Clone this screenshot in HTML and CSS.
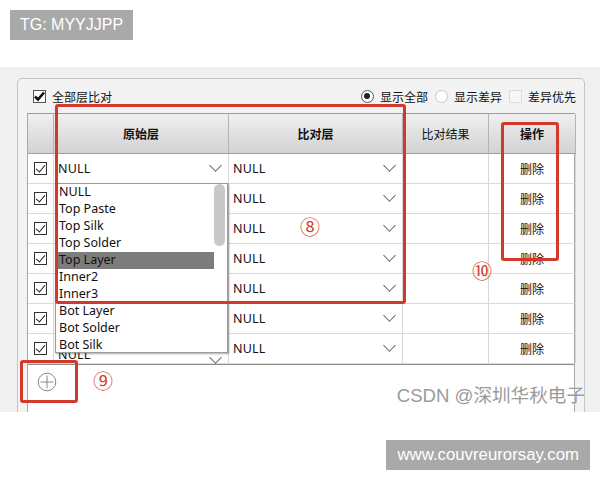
FILE: index.html
```html
<!DOCTYPE html>
<html lang="zh-CN">
<head>
    <meta charset="UTF-8">
    <title>层比对</title>
    <link rel="stylesheet" href="styles.css">
</head>
<body>
    <div class="top">
        <span class="tag">TG: MYYJJPP</span>
    </div>

    <div class="panel">
        <div class="group">
            <div class="toolbar">
                <div class="opt">
                    <span class="cb cb-main"><svg width="13" height="13" viewBox="0 0 13 13"><path d="M2 6.5 L5 9.5 L11 2.5" fill="none" stroke="#111" stroke-width="2.6"/></svg></span>
                    全部层比对
                </div>
                <div class="filters">
                    <div class="opt"><span class="radio on"></span>显示全部</div>
                    <div class="opt"><span class="radio"></span>显示差异</div>
                    <div class="opt"><span class="cb cb-off"></span>差异优先</div>
                </div>
            </div>

            <div class="grid">
                <div class="th"></div>
                <div class="th bold">原始层</div>
                <div class="th bold">比对层</div>
                <div class="th">比对结果</div>
                <div class="th bold">操作</div>

                <div class="td chk"><span class="cb"></span></div>
                <div class="td combo">NULL<span class="chev"></span></div>
                <div class="td combo">NULL<span class="chev"></span></div>
                <div class="td"></div>
                <div class="td act">删除</div>

                <!-- rows 2-6: first combo is covered by the open list -->
                <div class="td chk"><span class="cb"></span></div>
                <div class="td combo"></div>
                <div class="td combo">NULL<span class="chev"></span></div>
                <div class="td"></div>
                <div class="td act">删除</div>

                <div class="td chk"><span class="cb"></span></div>
                <div class="td combo"></div>
                <div class="td combo">NULL<span class="chev"></span></div>
                <div class="td"></div>
                <div class="td act">删除</div>

                <div class="td chk"><span class="cb"></span></div>
                <div class="td combo"></div>
                <div class="td combo">NULL<span class="chev"></span></div>
                <div class="td"></div>
                <div class="td act">删除</div>

                <div class="td chk"><span class="cb"></span></div>
                <div class="td combo"></div>
                <div class="td combo">NULL<span class="chev"></span></div>
                <div class="td"></div>
                <div class="td act">删除</div>

                <div class="td chk"><span class="cb"></span></div>
                <div class="td combo"></div>
                <div class="td combo">NULL<span class="chev"></span></div>
                <div class="td"></div>
                <div class="td act">删除</div>

                <div class="td chk"><span class="cb"></span></div>
                <div class="td combo low">NULL<span class="chev"></span></div>
                <div class="td combo">NULL<span class="chev"></span></div>
                <div class="td"></div>
                <div class="td act">删除</div>
            </div>

            <div class="add">
                <svg width="20" height="20" viewBox="0 0 20 20"><circle cx="10" cy="10" r="8.8" fill="none" stroke="#888" stroke-width="1"/><path d="M10 3.5 V16.5 M3.5 10 H16.5" stroke="#888" stroke-width="1"/></svg>
            </div>
        </div>

        <!-- open dropdown of the first row -->
        <div class="dropdown">
            <div class="item">NULL</div>
            <div class="item">Top Paste</div>
            <div class="item">Top Silk</div>
            <div class="item">Top Solder</div>
            <div class="item sel">Top Layer</div>
            <div class="item">Inner2</div>
            <div class="item">Inner3</div>
            <div class="item">Bot Layer</div>
            <div class="item">Bot Solder</div>
            <div class="item">Bot Silk</div>
            <div class="thumb"></div>
        </div>

        <!-- annotations -->
        <div class="mark mark8"></div>
        <div class="mark mark9"></div>
        <div class="mark mark10"></div>
        <span class="num num8">⑧</span>
        <span class="num num9">⑨</span>
        <span class="num num10">⑩</span>
        <span class="wm">CSDN @深圳华秋电子</span>
    </div>

    <div class="bottom">
        <span class="tag tag-url">www.couvreurorsay.com</span>
    </div>
</body>
</html>
```

FILE: styles.css
```css
body {
    margin: 0;
    background: #ffffff;
    font-family: "Noto Sans", "Noto Sans CJK SC", sans-serif;
    font-size: 12px;
    color: #222;
}
.top {
    height: 67px;
    padding: 10px 0 0 10px;
    box-sizing: border-box;
}
.tag {
    display: inline-block;
    background: #a9a9a9;
    color: #ffffff;
    font-family: "Liberation Sans", sans-serif;
    font-size: 16px;
    line-height: 30px;
    padding: 0 10px;
}
.tag-url {
    font-size: 16.8px;
    padding: 0 11px;
}
.panel {
    position: relative;
    height: 345px;
    overflow: hidden;
    background: #f0f0f0;
}
.group {
    margin: 11px 0 0 17px;
    width: 568px;
    height: 400px;
    box-sizing: border-box;
    border: 1px solid #c4c4c4;
    border-radius: 5px;
    background: #f3f3f3;
    padding: 0 9px;
}
.toolbar {
    display: flex;
    align-items: center;
    justify-content: space-between;
    height: 34px;
    padding-left: 6px;
}
.filters {
    display: flex;
    gap: 7px;
    margin-right: -1px;
}
.opt {
    display: flex;
    align-items: center;
    gap: 6px;
    font-family: "Noto Sans CJK SC", sans-serif;
    font-size: 12px;
    color: #111;
}
.cb {
    display: inline-block;
    width: 13px;
    height: 13px;
    box-sizing: border-box;
    border: 1px solid #333;
    background: #fff;
    position: relative;
}
.cb-main {
    border-color: #555;
}
.cb-main svg {
    position: absolute;
    left: -1px;
    top: -1px;
}
.cb-off {
    border-color: #dcdcdc;
    background: #f7f7f7;
}
.radio {
    display: inline-block;
    width: 13px;
    height: 13px;
    box-sizing: border-box;
    border: 1px solid #c8c8c8;
    border-radius: 50%;
    background: #fff;
    position: relative;
}
.radio.on {
    border-color: #555;
}
.radio.on::after {
    content: "";
    position: absolute;
    left: 2.5px;
    top: 2.5px;
    width: 6px;
    height: 6px;
    border-radius: 50%;
    background: #222;
}
.grid {
    display: grid;
    grid-template-columns: 26px 175px 174px 86px 87px;
    grid-template-rows: 40px repeat(7, 30px);
    background: #ffffff;
    border: 1px solid #a8a8a8;
    border-bottom-color: #8f8f8f;
    border-top-color: #9c9c9c;
}
.th {
    display: flex;
    align-items: center;
    justify-content: center;
    background: linear-gradient(#f0f0f0, #d2d2d2);
    border-right: 1px solid #b4b4b4;
    border-bottom: 1px solid #a0a0a0;
    font-family: "Noto Sans CJK SC", sans-serif;
    font-size: 12px;
    color: #111;
}
.th.bold {
    font-weight: bold;
}
.td {
    display: flex;
    align-items: center;
    border-right: 1px solid #d8d8d8;
    border-bottom: 1px solid #dadada;
    font-size: 12.5px;
    color: #111;
}
.chk {
    justify-content: center;
}
.chk .cb::after {
    content: "";
    position: absolute;
    left: 3px;
    top: 0px;
    width: 4px;
    height: 8px;
    border-right: 1px solid #222;
    border-bottom: 1px solid #222;
    transform: rotate(40deg);
}
.combo {
    padding-left: 4px;
    justify-content: space-between;
    letter-spacing: 0.2px;
}
.combo.low {
    align-items: flex-end;
    padding-bottom: 1px;
    line-height: 14px;
}
.chev {
    width: 8px;
    height: 8px;
    margin: -6px 8px 0 0;
    border-right: 1.5px solid #666;
    border-bottom: 1.5px solid #666;
    transform: rotate(45deg);
}
.act {
    justify-content: center;
    font-family: "Noto Sans CJK SC", sans-serif;
    font-size: 12px;
}
.add {
    height: 60px;
    background: #ffffff;
    border-left: 1px solid #a8a8a8;
    border-right: 1px solid #a8a8a8;
    padding: 7px 0 0 9px;
    box-sizing: border-box;
}
.dropdown {
    position: absolute;
    left: 55px;
    top: 116px;
    width: 173px;
    height: 170px;
    background: #ffffff;
    border: 1px solid #9a9a9a;
    box-sizing: border-box;
    box-shadow: 1px 1px 2px rgba(0, 0, 0, 0.35);
}
.item {
    height: 17px;
    line-height: 15px;
    width: 158px;
    padding-left: 3px;
    box-sizing: border-box;
    font-size: 12.5px;
    color: #111;
}
.item.sel {
    background: #7d7d7d;
}
.thumb {
    position: absolute;
    right: 2px;
    top: 0px;
    width: 11px;
    height: 62px;
    border-radius: 6px;
    background: #c8c8c8;
}
.mark {
    position: absolute;
    border: 3px solid #d4382c;
    border-radius: 3px;
    box-sizing: border-box;
}
.mark8 {
    left: 55px;
    top: 37px;
    width: 351px;
    height: 200px;
}
.mark9 {
    left: 20px;
    top: 293px;
    width: 58px;
    height: 43px;
}
.mark10 {
    left: 501px;
    top: 55px;
    width: 58px;
    height: 139px;
}
.num {
    position: absolute;
    color: #d4402f;
    font-family: "Noto Sans CJK SC", sans-serif;
    font-size: 20px;
    line-height: 20px;
}
.num8 {
    left: 300px;
    top: 150px;
}
.num9 {
    left: 93px;
    top: 304px;
}
.num10 {
    left: 472px;
    top: 194px;
}
.wm {
    position: absolute;
    right: 15px;
    top: 313px;
    font-family: "Liberation Sans", "Noto Sans CJK SC", sans-serif;
    font-size: 18.6px;
    color: #9a9a9a;
    text-shadow: 0 0 2px #ffffff;
}
.bottom {
    display: flex;
    justify-content: flex-end;
    padding: 28px 10px 0 0;
}
```
